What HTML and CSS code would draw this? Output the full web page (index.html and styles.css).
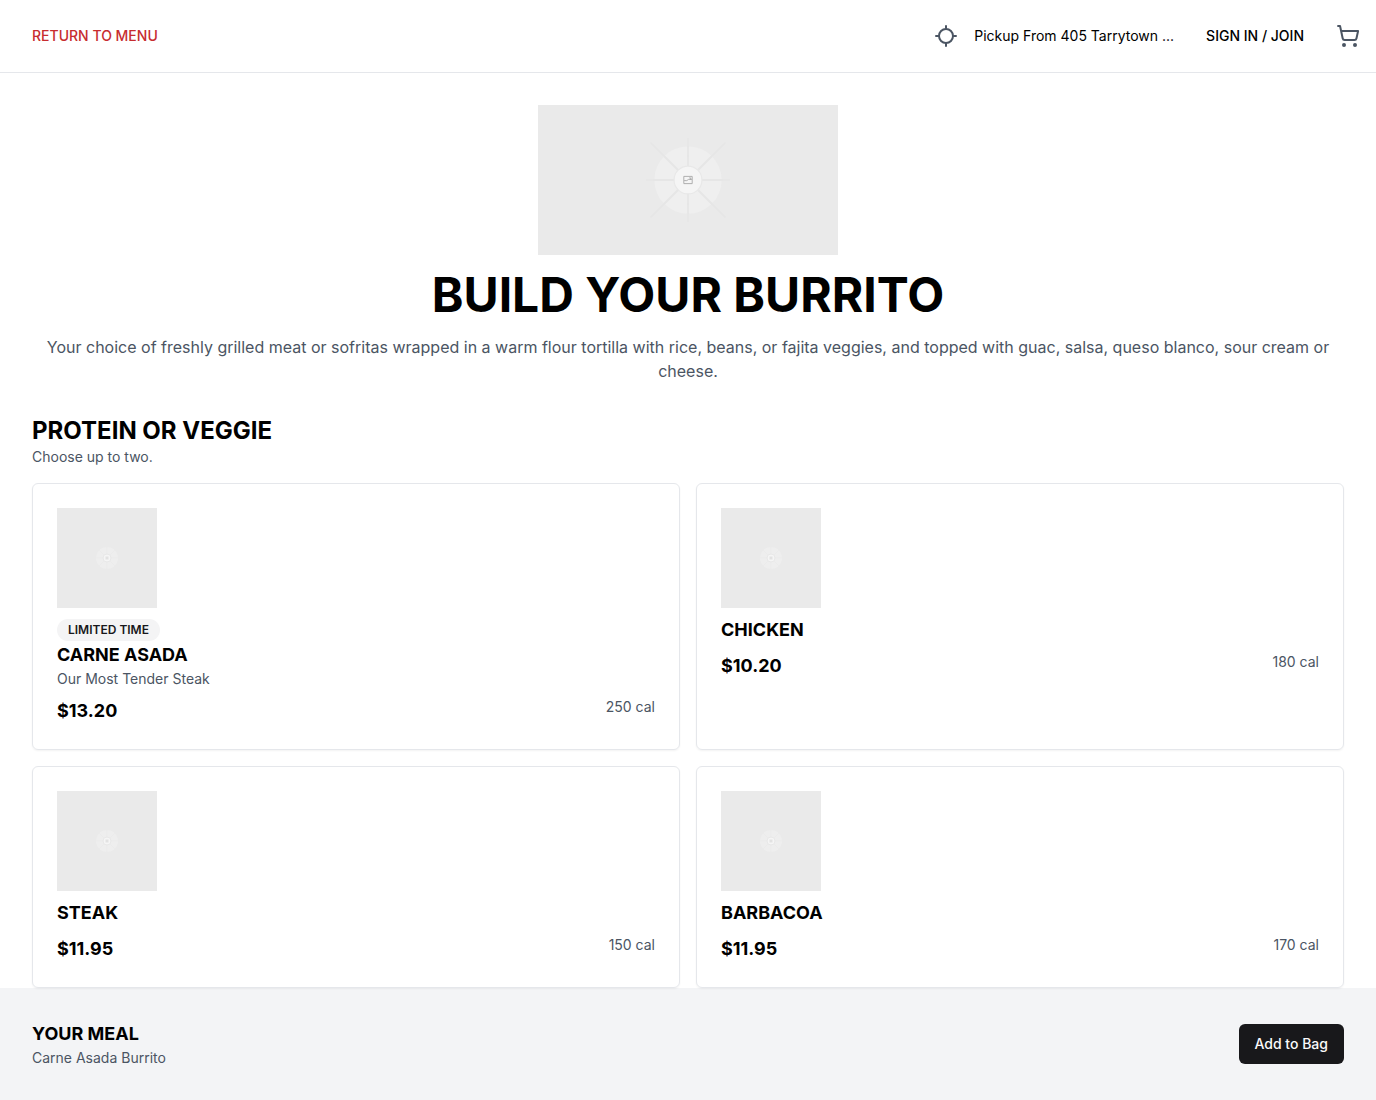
FILE: index.html
```html
<!DOCTYPE html>
<html lang="en">
<head>
<meta charset="utf-8">
<meta name="viewport" content="width=device-width, initial-scale=1">
<title>Build Your Burrito</title>
<link rel="stylesheet" href="styles.css">
</head>
<body>
<svg class="sprite" aria-hidden="true">
  <symbol id="placeholder" viewBox="0 0 100 100">
    <g stroke="#e6e6e6" stroke-width="1">
      <path d="M50 22v56M22 50h56M25 25l50 50M75 25L25 75"/>
    </g>
    <circle cx="50" cy="50" r="22.5" fill="#f2f2f2" fill-opacity=".6"/>
    <g stroke="#e6e6e6" stroke-width="1.2">
      <path d="M50 27v46M27 50h46M34 34l32 32M66 34L34 66"/>
    </g>
    <circle cx="50" cy="50" r="9.3" fill="#f5f5f5" stroke="#e8e8e8" stroke-width=".8"/>
    <path d="M47.2 47.6h5.6v4.8h-5.6zM47.4 50.4h1.8l1.2-.8h2.2M50.8 48.6h1v1.4" fill="none" stroke="#a8a8a8" stroke-width=".6"/>
  </symbol>
  <symbol id="placeholder-small" viewBox="0 0 100 100">
    <circle cx="50" cy="50" r="11" fill="#eeeeee"/>
    <path d="M50 39v22M39 50h22M42 42l16 16M58 42L42 58" stroke="#eaeaea" stroke-width=".6"/>
    <circle cx="50" cy="50" r="4" fill="#f5f5f5" stroke="#e4e4e4" stroke-width=".8"/>
    <path d="M48.5 48.5h3v3h-3z" fill="#e2e2e2"/>
  </symbol>
</svg>

<header class="topbar">
  <a class="return-link" href="#">RETURN TO MENU</a>
  <div class="account">
    <div class="pickup">
      <svg class="icon" viewBox="0 0 24 24" aria-hidden="true"><circle cx="12" cy="12" r="7"/><path d="M12 5V2M12 22v-3M19 12h3M2 12h3"/></svg>
      <span>Pickup From 405 Tarrytown ...</span>
    </div>
    <a class="sign-in" href="#">SIGN IN / JOIN</a>
    <button class="cart" type="button" aria-label="Cart">
      <svg class="icon" viewBox="0 0 24 24" aria-hidden="true"><circle cx="8" cy="21" r="1"/><circle cx="19" cy="21" r="1"/><path d="M2.05 2.05h2l2.66 12.42a2 2 0 0 0 2 1.58h9.78a2 2 0 0 0 1.95-1.57l1.65-7.43H5.12"/></svg>
    </button>
  </div>
</header>

<main class="builder">
  <section class="intro">
    <svg class="intro-image" role="img" aria-label="Burrito"><use href="#placeholder"/></svg>
    <h1>BUILD YOUR BURRITO</h1>
    <p>Your choice of freshly grilled meat or sofritas wrapped in a warm flour tortilla with rice, beans, or fajita veggies, and topped with guac, salsa, queso blanco, sour cream or cheese.</p>
  </section>

  <section class="choices">
    <h2>PROTEIN OR VEGGIE</h2>
    <p class="note">Choose up to two.</p>
    <div class="grid">
      <article class="card">
        <svg class="card-image" role="img" aria-label="Carne Asada"><use href="#placeholder-small"/></svg>
        <div class="card-text">
          <div class="badge-row"><span class="badge">LIMITED TIME</span></div>
          <h3>CARNE ASADA</h3>
          <p class="note">Our Most Tender Steak</p>
        </div>
        <div class="facts"><span class="price">$13.20</span><span class="note">250 cal</span></div>
      </article>
      <article class="card">
        <svg class="card-image" role="img" aria-label="Chicken"><use href="#placeholder-small"/></svg>
        <div class="card-text"><h3>CHICKEN</h3></div>
        <div class="facts"><span class="price">$10.20</span><span class="note">180 cal</span></div>
      </article>
      <article class="card">
        <svg class="card-image" role="img" aria-label="Steak"><use href="#placeholder-small"/></svg>
        <div class="card-text"><h3>STEAK</h3></div>
        <div class="facts"><span class="price">$11.95</span><span class="note">150 cal</span></div>
      </article>
      <article class="card">
        <svg class="card-image" role="img" aria-label="Barbacoa"><use href="#placeholder-small"/></svg>
        <div class="card-text"><h3>BARBACOA</h3></div>
        <div class="facts"><span class="price">$11.95</span><span class="note">170 cal</span></div>
      </article>
    </div>
  </section>
</main>

<footer class="meal">
  <div>
    <h3>YOUR MEAL</h3>
    <p class="note">Carne Asada Burrito</p>
  </div>
  <button class="add" type="button">Add to Bag</button>
</footer>
</body>
</html>
```
FILE: styles.css
```css
* {
  box-sizing: border-box;
  margin: 0;
}

body {
  background: #fff;
  color: #000;
  font-family: Inter, "Liberation Sans", sans-serif;
  font-size: 16px;
  line-height: 24px;
}

a {
  color: inherit;
  text-decoration: none;
}

button {
  border: 0;
  font: inherit;
  cursor: pointer;
}

.sprite {
  display: none;
}

.topbar {
  display: flex;
  align-items: center;
  justify-content: space-between;
  padding: 24px 16px 24px 32px;
  border-bottom: 1px solid #e5e7eb;
  font-size: 14px;
}

.return-link {
  color: #c72c2f;
  font-weight: 500;
}

.account {
  display: flex;
  align-items: center;
  gap: 32px;
}

.pickup {
  display: flex;
  align-items: center;
  gap: 16px;
}

.sign-in {
  font-weight: 500;
}

.cart {
  display: flex;
  padding: 0;
  background: none;
}

.icon {
  width: 24px;
  height: 24px;
  fill: none;
  stroke: #4b5563;
  stroke-width: 2;
  stroke-linecap: round;
  stroke-linejoin: round;
}

.builder {
  padding: 32px 32px 0;
}

.intro {
  display: flex;
  flex-direction: column;
  align-items: center;
  gap: 16px;
  color: #4b5563;
  text-align: center;
}

.intro-image {
  width: 300px;
  height: 150px;
  background: #eaeaea;
}

h1 {
  color: #000;
  font-size: 48px;
  font-weight: 700;
  line-height: 48px;
}

.choices {
  padding-top: 32px;
}

h2 {
  font-size: 24px;
  font-weight: 700;
  line-height: 32px;
}

h3,
.price {
  font-size: 18px;
  font-weight: 700;
  line-height: 28px;
}

.note {
  color: #4b5563;
  font-size: 14px;
  line-height: 20px;
}

.grid {
  display: grid;
  grid-template-columns: 1fr 1fr;
  gap: 16px;
  margin-top: 16px;
}

.card {
  padding: 24px;
  border: 1px solid #e5e7eb;
  border-radius: 6px;
  box-shadow: 0 1px 2px rgba(0, 0, 0, 0.05);
}

.card-image {
  display: block;
  width: 100px;
  height: 100px;
  background: #eaeaea;
}

.card-text {
  padding: 8px 0;
}

.badge-row {
  display: flex;
  padding-top: 3px;
}

.badge {
  padding: 3px 11px;
  border-radius: 11px;
  background: #f4f4f5;
  color: #18181b;
  font-size: 12px;
  font-weight: 600;
  line-height: 16px;
}

.facts {
  display: flex;
  align-items: flex-start;
  justify-content: space-between;
}

.meal {
  display: flex;
  align-items: center;
  justify-content: space-between;
  padding: 32px;
  background: #f3f4f6;
}

.add {
  padding: 10px 16px;
  border-radius: 6px;
  background: #18181b;
  color: #fafafa;
  font-size: 14px;
  font-weight: 500;
  line-height: 20px;
}
```
